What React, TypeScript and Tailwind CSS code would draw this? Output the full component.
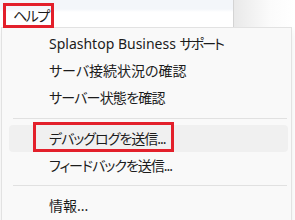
import React from 'react';

const font = {
  fontFamily: '"Noto Sans", "Noto Sans CJK JP", sans-serif',
  fontFeatureSettings: '"palt"',
};

const MenuItem: React.FC<{ children: React.ReactNode; active?: boolean; boxed?: boolean; tight?: string }> = ({
  children,
  active,
  boxed,
  tight = '',
}) => (
  <div className={`relative ml-[7px] mr-[3px] flex h-[27px] items-center rounded-[4px] pl-[40px] ${active ? 'bg-[#f0f0f0]' : ''}`}>
    <span className={`whitespace-nowrap text-[14px] leading-none text-[#1c1c1c] ${tight}`}>{children}</span>
    {boxed && (
      <div className="absolute left-[24px] top-[-3px] h-[30px] w-[141px] border-[3px] border-[#e3202b]" />
    )}
  </div>
);

const Separator = () => <div className="ml-[11px] mr-[4px] my-[6px] h-px bg-[#e1e1e1]" />;

export default function App() {
  return (
    <div className="h-[220px] w-[295px] overflow-hidden bg-white" style={font}>
      <div className="flex h-[27px]">
        <div className="relative flex-1 bg-[linear-gradient(#f3f6fa_0,#f3f6fa_9px,#ffffff_12px)]">
          <div className="absolute left-[3px] top-[3px] flex h-[25px] w-[51px] items-center border-[3px] border-[#e3202b] pl-[7px]">
            <span className="whitespace-nowrap text-[14px] leading-none tracking-[-1.5px] text-[#1c1c1c]">ヘルプ</span>
          </div>
        </div>
        <div className="w-px bg-[#d4d4d4]" />
        <div className="w-[61px] bg-[linear-gradient(90deg,#e9e9e9,#fbfbfb_60%,#ffffff)]" />
      </div>
      <div className="ml-px mr-[3px] h-[200px] rounded-b-[6px] border-l border-r border-t border-[#e2e2e2] bg-[#f9f9f9] pt-[2px] shadow-[0_4px_8px_rgba(0,0,0,0.08)]">
        <MenuItem>
          Splashtop Business <span className="tracking-[-2px]">サポート</span>
        </MenuItem>
        <MenuItem>サーバ接続状況の確認</MenuItem>
        <MenuItem tight="tracking-[-0.8px]">サーバー状態を確認</MenuItem>
        <div className="h-px" />
        <Separator />
        <MenuItem active boxed tight="tracking-[-1px]">
          デバッグログを送信...
        </MenuItem>
        <MenuItem tight="tracking-[-1px]">フィードバックを送信...</MenuItem>
        <Separator />
        <MenuItem>情報...</MenuItem>
      </div>
    </div>
  );
}
